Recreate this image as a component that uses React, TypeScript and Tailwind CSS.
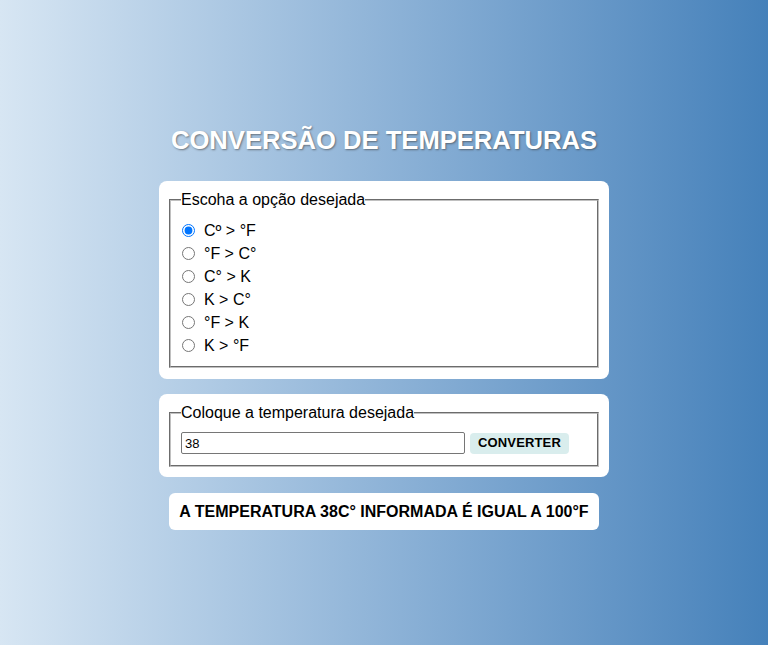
import { useState } from 'react';

const options = ['Cº > °F', '°F > C°', 'C° > K', 'K > C°', '°F > K', 'K > °F'];

export default function App() {
    const [selected, setSelected] = useState(0);
    const [value, setValue] = useState('38');

    return (
        <div className="min-h-[645px] w-full bg-gradient-to-r from-[#d7e6f3] to-[#4581ba] font-['Liberation_Sans',Arial,sans-serif] text-black">
            <div className="flex flex-col items-center pt-[124px]">
                {/* Title */}
                <h1 className="text-[25.6px] font-bold leading-[32px] text-white [text-shadow:1px_1px_2px_rgba(60,60,60,0.6)]">
                    CONVERSÃO DE TEMPERATURAS
                </h1>

                {/* Options card */}
                <div className="mt-[25px] w-[450px] rounded-lg bg-white p-[10px] pb-[11px]">
                    <fieldset className="border-2 border-[#c0c0c0] px-[10px] pb-[9px] [border-style:groove]">
                        <legend className="px-0 text-[16px] leading-[18px]">Escoha a opção desejada</legend>
                        <div className="mt-[10px] flex flex-col">
                            {options.map((opt, i) => (
                                <label key={opt} className="flex h-[23px] items-center gap-[9px] text-[16px]">
                                    <input
                                        type="radio"
                                        name="op"
                                        checked={selected === i}
                                        onChange={() => setSelected(i)}
                                        className="ml-[1px] h-[13px] w-[13px]"
                                    />
                                    <span>{opt}</span>
                                </label>
                            ))}
                        </div>
                    </fieldset>
                </div>

                {/* Input card */}
                <div className="mt-[15px] w-[450px] rounded-lg bg-white p-[10px]">
                    <fieldset className="border-2 border-[#c0c0c0] px-[10px] pb-[11px] [border-style:groove]">
                        <legend className="px-0 text-[16px] leading-[18px]">Coloque a temperatura desejada</legend>
                        <div className="mt-[10px] flex items-center gap-[5px]">
                            <input
                                type="text"
                                value={value}
                                onChange={e => setValue(e.target.value)}
                                className="h-[22px] w-[284px] rounded-[2px] border border-[#767676] px-[3px] text-[13px] text-black"
                            />
                            <button className="h-[21px] rounded-[4px] bg-[#d9eded] px-[8px] text-[13px] font-bold tracking-[0.15px]">
                                CONVERTER
                            </button>
                        </div>
                    </fieldset>
                </div>

                {/* Result */}
                <div className="mt-[16px] flex h-[37px] w-[430px] items-center justify-center rounded-md bg-white">
                    <span className="text-[16px] font-bold">A TEMPERATURA 38C° INFORMADA É IGUAL A 100°F</span>
                </div>
            </div>
        </div>
    );
}
